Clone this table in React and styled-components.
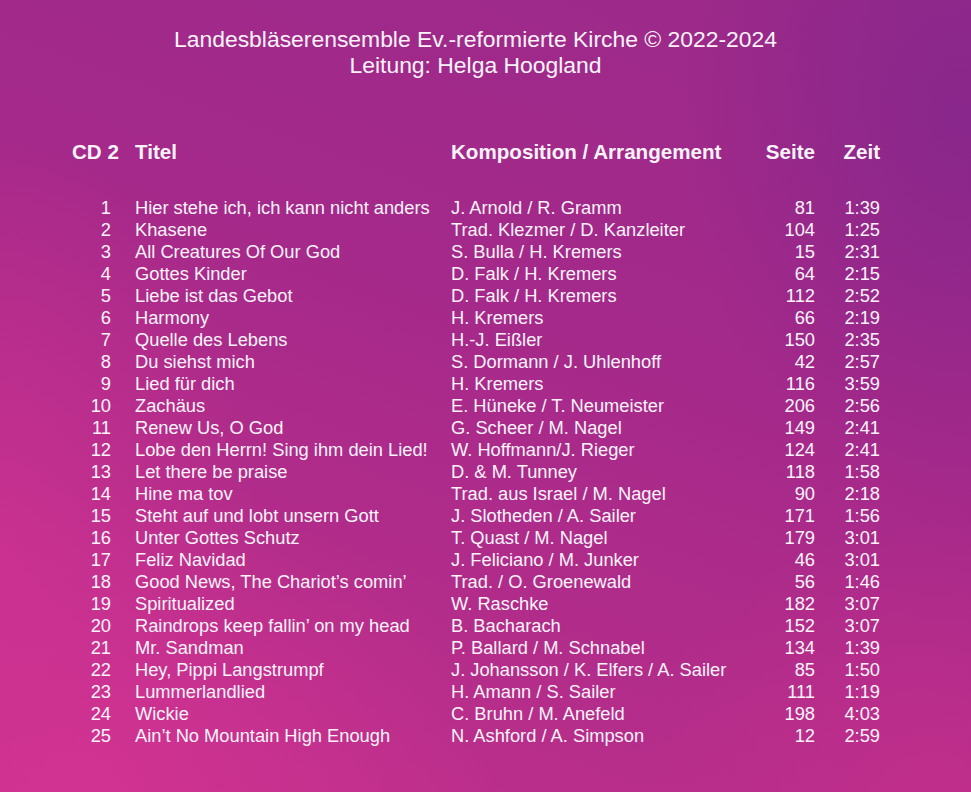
import styled, { createGlobalStyle } from 'styled-components';

const tracks = [
  ['1', 'Hier stehe ich, ich kann nicht anders', 'J. Arnold / R. Gramm', '81', '1:39'],
  ['2', 'Khasene', 'Trad. Klezmer / D. Kanzleiter', '104', '1:25'],
  ['3', 'All Creatures Of Our God', 'S. Bulla / H. Kremers', '15', '2:31'],
  ['4', 'Gottes Kinder', 'D. Falk / H. Kremers', '64', '2:15'],
  ['5', 'Liebe ist das Gebot', 'D. Falk / H. Kremers', '112', '2:52'],
  ['6', 'Harmony', 'H. Kremers', '66', '2:19'],
  ['7', 'Quelle des Lebens', 'H.-J. Eißler', '150', '2:35'],
  ['8', 'Du siehst mich', 'S. Dormann / J. Uhlenhoff', '42', '2:57'],
  ['9', 'Lied für dich', 'H. Kremers', '116', '3:59'],
  ['10', 'Zachäus', 'E. Hüneke / T. Neumeister', '206', '2:56'],
  ['11', 'Renew Us, O God', 'G. Scheer / M. Nagel', '149', '2:41'],
  ['12', 'Lobe den Herrn! Sing ihm dein Lied!', 'W. Hoffmann/J. Rieger', '124', '2:41'],
  ['13', 'Let there be praise', 'D. & M. Tunney', '118', '1:58'],
  ['14', 'Hine ma tov', 'Trad. aus Israel / M. Nagel', '90', '2:18'],
  ['15', 'Steht auf und lobt unsern Gott', 'J. Slotheden / A. Sailer', '171', '1:56'],
  ['16', 'Unter Gottes Schutz', 'T. Quast / M. Nagel', '179', '3:01'],
  ['17', 'Feliz Navidad', 'J. Feliciano / M. Junker', '46', '3:01'],
  ['18', 'Good News, The Chariot’s comin’', 'Trad. / O. Groenewald', '56', '1:46'],
  ['19', 'Spiritualized', 'W. Raschke', '182', '3:07'],
  ['20', 'Raindrops keep fallin’ on my head', 'B. Bacharach', '152', '3:07'],
  ['21', 'Mr. Sandman', 'P. Ballard / M. Schnabel', '134', '1:39'],
  ['22', 'Hey, Pippi Langstrumpf', 'J. Johansson / K. Elfers / A. Sailer', '85', '1:50'],
  ['23', 'Lummerlandlied', 'H. Amann / S. Sailer', '111', '1:19'],
  ['24', 'Wickie', 'C. Bruhn / M. Anefeld', '198', '4:03'],
  ['25', 'Ain’t No Mountain High Enough', 'N. Ashford / A. Simpson', '12', '2:59'],
];

const GlobalStyle = createGlobalStyle`
  html, body {
    margin: 0;
    padding: 0;
  }
  body {
    font-family: "Liberation Sans", Arial, sans-serif;
  }
`;

const App = () => {
  return (
    <>
      <GlobalStyle />
      <Page>
        <Heading>
          <HeadingLine>Landesbläserensemble Ev.-reformierte Kirche © 2022-2024</HeadingLine>
          <HeadingLine>Leitung: Helga Hoogland</HeadingLine>
        </Heading>
        <HeadRow>
          <HeadCell>CD 2</HeadCell>
          <HeadCell>Titel</HeadCell>
          <HeadCell>Komposition / Arrangement</HeadCell>
          <HeadCell $right>Seite</HeadCell>
          <HeadCell $right>Zeit</HeadCell>
        </HeadRow>
        <TrackList>
          {tracks.map(([nr, title, composer, page, time]) => (
            <Row key={nr}>
              <Cell $right $pad>{nr}</Cell>
              <Cell>{title}</Cell>
              <Cell>{composer}</Cell>
              <Cell $right>{page}</Cell>
              <Cell $right>{time}</Cell>
            </Row>
          ))}
        </TrackList>
      </Page>
    </>
  );
};

export default App;

const columns = '63px 316px 309px 55px 65px';

const Page = styled.div`
  width: 971px;
  height: 792px;
  box-sizing: border-box;
  overflow: hidden;
  padding-top: 26px;
  color: #fbf3fa;
  background:
    radial-gradient(ellipse 260px 420px at 0px 560px, rgba(208, 50, 146, 0.7), rgba(208, 50, 146, 0) 100%),
    radial-gradient(ellipse 420px 300px at 80px 780px, rgba(214, 52, 148, 0.75), rgba(214, 52, 148, 0) 100%),
    radial-gradient(ellipse 300px 260px at 940px 780px, rgba(205, 48, 140, 0.5), rgba(205, 48, 140, 0) 100%),
    radial-gradient(ellipse 280px 380px at 960px 120px, rgba(124, 36, 140, 0.6), rgba(124, 36, 140, 0) 100%),
    linear-gradient(200deg, #9a2a8a 0%, #a4298a 40%, #b52d8a 75%, #c4308c 100%);
`;

const Heading = styled.div`
  display: flex;
  flex-direction: column;
  align-items: center;
  padding-right: 20px;
`;

const HeadingLine = styled.div`
  font-size: 22.9px;
  line-height: 26px;
  white-space: nowrap;
`;

const HeadRow = styled.div`
  display: grid;
  grid-template-columns: ${columns};
  height: 22px;
  margin: 63px 0 34px 72px;
`;

const HeadCell = styled.div`
  font-size: 20.6px;
  font-weight: bold;
  line-height: 22px;
  white-space: nowrap;
  text-align: ${({ $right }) => ($right ? 'right' : 'left')};
`;

const TrackList = styled.div`
  display: flex;
  flex-direction: column;
  margin-left: 72px;
`;

const Row = styled.div`
  display: grid;
  grid-template-columns: ${columns};
  height: 22px;
`;

const Cell = styled.div`
  font-size: 18.3px;
  line-height: 22px;
  white-space: nowrap;
  text-align: ${({ $right }) => ($right ? 'right' : 'left')};
  padding-right: ${({ $pad }) => ($pad ? '24px' : '0')};
`;
